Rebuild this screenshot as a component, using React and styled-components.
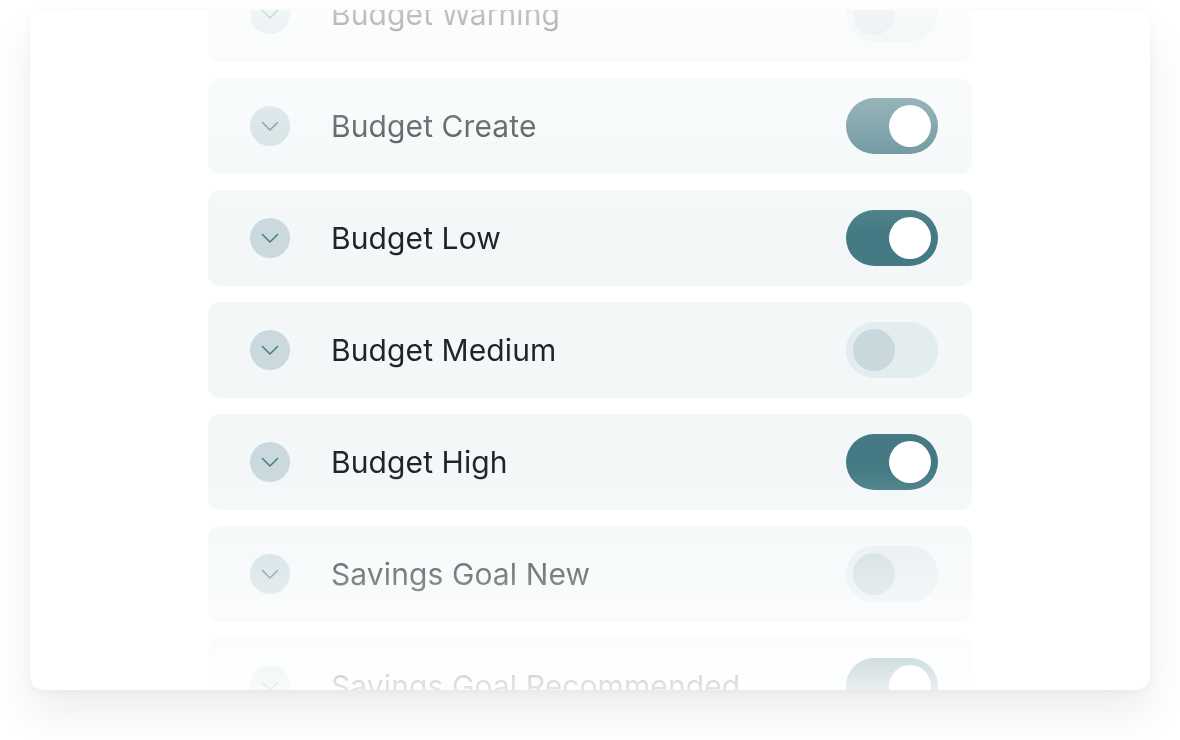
import React, { useState } from "react";
import styled, { createGlobalStyle } from "styled-components";

const GlobalStyle = createGlobalStyle`
  html, body { margin: 0; padding: 0; background: #ffffff; }
  body { font-family: "Inter", "Noto Sans", sans-serif; }
`;

const Page = styled.div`
  width: 1180px;
  height: 740px;
  padding: 10px 30px 50px;
  box-sizing: border-box;
  background: #ffffff;
`;

const Card = styled.div`
  height: 680px;
  background: #ffffff;
  border-radius: 14px;
  box-shadow: 0 24px 44px rgba(0, 0, 0, 0.07), 0 2px 8px rgba(0, 0, 0, 0.04);
  overflow: hidden;
  display: flex;
  justify-content: center;
`;

const List = styled.div`
  width: 764px;
  height: 724px;
  margin-top: -44px;
  display: flex;
  flex-direction: column;
  gap: 16px;
  -webkit-mask-image: linear-gradient(
    to bottom,
    rgba(0, 0, 0, 0.12) 0px,
    rgba(0, 0, 0, 1) 264px,
    rgba(0, 0, 0, 1) 504px,
    rgba(0, 0, 0, 0.12) 724px
  );
  mask-image: linear-gradient(
    to bottom,
    rgba(0, 0, 0, 0.12) 0px,
    rgba(0, 0, 0, 1) 264px,
    rgba(0, 0, 0, 1) 504px,
    rgba(0, 0, 0, 0.12) 724px
  );
`;

const Row = styled.div`
  flex: 0 0 96px;
  height: 96px;
  border-radius: 12px;
  background: #f3f7f8;
  display: flex;
  align-items: center;
  padding: 0 34px 0 42px;
  box-sizing: border-box;
`;

const Chevron = styled.button`
  width: 40px;
  height: 40px;
  border-radius: 50%;
  border: none;
  background: #c9d9de;
  display: flex;
  align-items: center;
  justify-content: center;
  padding: 0;
  flex: none;
`;

const Label = styled.span`
  margin-left: 41px;
  flex: 1;
  font-size: 30px;
  color: #1f2426;
  letter-spacing: 0.1px;
`;

const Track = styled.button`
  width: 92px;
  height: 56px;
  border-radius: 28px;
  border: none;
  padding: 7px;
  background: ${({ $on }) => ($on ? "#457a84" : "#e3ecef")};
  display: flex;
  justify-content: ${({ $on }) => ($on ? "flex-end" : "flex-start")};
  box-sizing: border-box;
  cursor: pointer;
`;

const Knob = styled.span`
  width: 42px;
  height: 42px;
  border-radius: 50%;
  background: ${({ $on }) => ($on ? "#ffffff" : "#c8d8dd")};
`;

const items = [
  { name: "Budget Warning", on: false },
  { name: "Budget Create", on: true },
  { name: "Budget Low", on: true },
  { name: "Budget Medium", on: false },
  { name: "Budget High", on: true },
  { name: "Savings Goal New", on: false },
  { name: "Savings Goal Recommended", on: true },
];

function ChevronDown() {
  return (
    <svg width="18" height="10" viewBox="0 0 18 10" fill="none">
      <path d="M1.5 1.5l7.5 7.5 7.5-7.5" stroke="#457a84" strokeWidth="1.5" strokeLinecap="round" strokeLinejoin="round" />
    </svg>
  );
}

function NotificationRow({ name, on }) {
  const [active, setActive] = useState(on);
  return (
    <Row>
      <Chevron>
        <ChevronDown />
      </Chevron>
      <Label>{name}</Label>
      <Track $on={active} onClick={() => setActive(!active)}>
        <Knob $on={active} />
      </Track>
    </Row>
  );
}

export default function App() {
  return (
    <>
      <GlobalStyle />
      <Page>
        <Card>
          <List>
            {items.map((it) => (
              <NotificationRow key={it.name} {...it} />
            ))}
          </List>
        </Card>
      </Page>
    </>
  );
}
